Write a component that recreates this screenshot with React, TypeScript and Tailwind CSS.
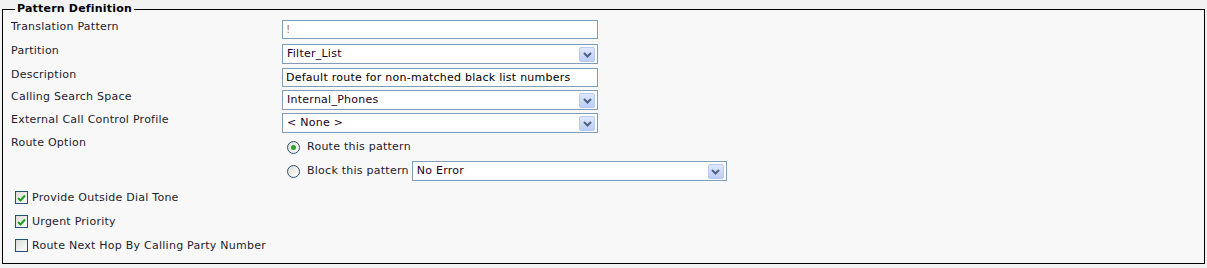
import React from 'react';

const font = { fontFamily: '"DejaVu Sans", Verdana, sans-serif' };

function Chevron() {
    return (
        <span className="absolute right-[2px] top-[2px] flex h-[15px] w-[16px] items-center justify-center rounded-[2px] border border-[#b9c9ef] bg-gradient-to-b from-[#dfe7fb] to-[#bccdf5]">
            <svg width="9" height="6" viewBox="0 0 9 6">
                <path d="M1 1 L4.5 4.5 L8 1" fill="none" stroke="#4d6185" strokeWidth="2" />
            </svg>
        </span>
    );
}

function Select({ value, w = 'w-[316px]' }: { value: string; w?: string }) {
    return (
        <div className={`relative h-[20px] ${w} border border-[#7f9db9] bg-white pl-[4px] text-[11px] leading-[18px] tracking-[0.25px] text-[#220022]`}>
            {value}
            <Chevron />
        </div>
    );
}

function TextBox({ value, color = 'text-black' }: { value: string; color?: string }) {
    return (
        <div className={`h-[19px] w-[316px] border border-[#7f9db9] bg-white pl-[3px] text-[11px] leading-[17px] tracking-[0.25px] ${color}`}>
            {value}
        </div>
    );
}

function Radio({ checked }: { checked?: boolean }) {
    return (
        <span className="flex h-[13px] w-[13px] shrink-0 items-center justify-center rounded-full border border-[#2f4f6f] bg-gradient-to-br from-[#dcdcd6] to-white">
            {checked && <span className="h-[5px] w-[5px] rounded-full bg-[#2ba32b]" />}
        </span>
    );
}

function Check({ checked }: { checked?: boolean }) {
    return (
        <span className="flex h-[13px] w-[13px] shrink-0 items-center justify-center border border-[#1c5180] bg-gradient-to-br from-[#dcdcd7] to-white">
            {checked && (
                <svg width="9" height="8" viewBox="0 0 9 8">
                    <path d="M1 4 L3.5 6.5 L8 1.5" fill="none" stroke="#21a121" strokeWidth="2" />
                </svg>
            )}
        </span>
    );
}

function Row({ label, children, className = '' }: { label: string; children: React.ReactNode; className?: string }) {
    return (
        <div className={`flex items-start ${className}`}>
            <div className="w-[271px] pt-[1px] text-[11px] leading-[12px] tracking-[0.25px] text-[#1c1c2e]">{label}</div>
            {children}
        </div>
    );
}

export default function App() {
    return (
        <div className="h-[268px] w-[1207px] bg-[#f2f2f2] pt-[1px]" style={font}>
            <fieldset className="mx-[2px] h-[263px] border border-black bg-[#f8f8f9] pl-[8px]">
                <legend className="ml-[4px] px-[2px] text-[11px] font-bold leading-[16px] tracking-[0.2px] text-black">Pattern Definition</legend>

                <Row label="Translation Pattern" className="mt-[3px]">
                    <TextBox value="!" color="text-[#c07a18]" />
                </Row>
                <Row label="Partition" className="mt-[5px]">
                    <Select value="Filter_List" />
                </Row>
                <Row label="Description" className="mt-[4px]">
                    <TextBox value="Default route for non-matched black list numbers" />
                </Row>
                <Row label="Calling Search Space" className="mt-[3px]">
                    <Select value="Internal_Phones" />
                </Row>
                <Row label="External Call Control Profile" className="mt-[3px]">
                    <Select value="< None >" />
                </Row>
                <Row label="Route Option" className="mt-[3px]">
                    <div className="flex flex-col pl-[5px] pt-[2px]">
                        <label className="flex h-[18px] items-center gap-[7px] text-[11px] tracking-[0.25px] text-[#1c1c2e]">
                            <Radio checked />
                            Route this pattern
                        </label>
                        <div className="mt-[5px] flex items-center gap-[7px] text-[11px] tracking-[0.25px] text-[#1c1c2e]">
                            <Radio />
                            <span>Block this pattern</span>
                            <div className="-ml-[4px]">
                                <Select value="No Error" w="w-[315px]" />
                            </div>
                        </div>
                    </div>
                </Row>

                <div className="mt-[10px] flex flex-col gap-[11px] pl-[4px] text-[11px] leading-[13px] tracking-[0.25px] text-[#1c1c2e]">
                    <label className="flex items-center gap-[4px]">
                        <Check checked />
                        Provide Outside Dial Tone
                    </label>
                    <label className="flex items-center gap-[4px]">
                        <Check checked />
                        Urgent Priority
                    </label>
                    <label className="flex items-center gap-[4px]">
                        <Check />
                        Route Next Hop By Calling Party Number
                    </label>
                </div>
            </fieldset>
        </div>
    );
}
